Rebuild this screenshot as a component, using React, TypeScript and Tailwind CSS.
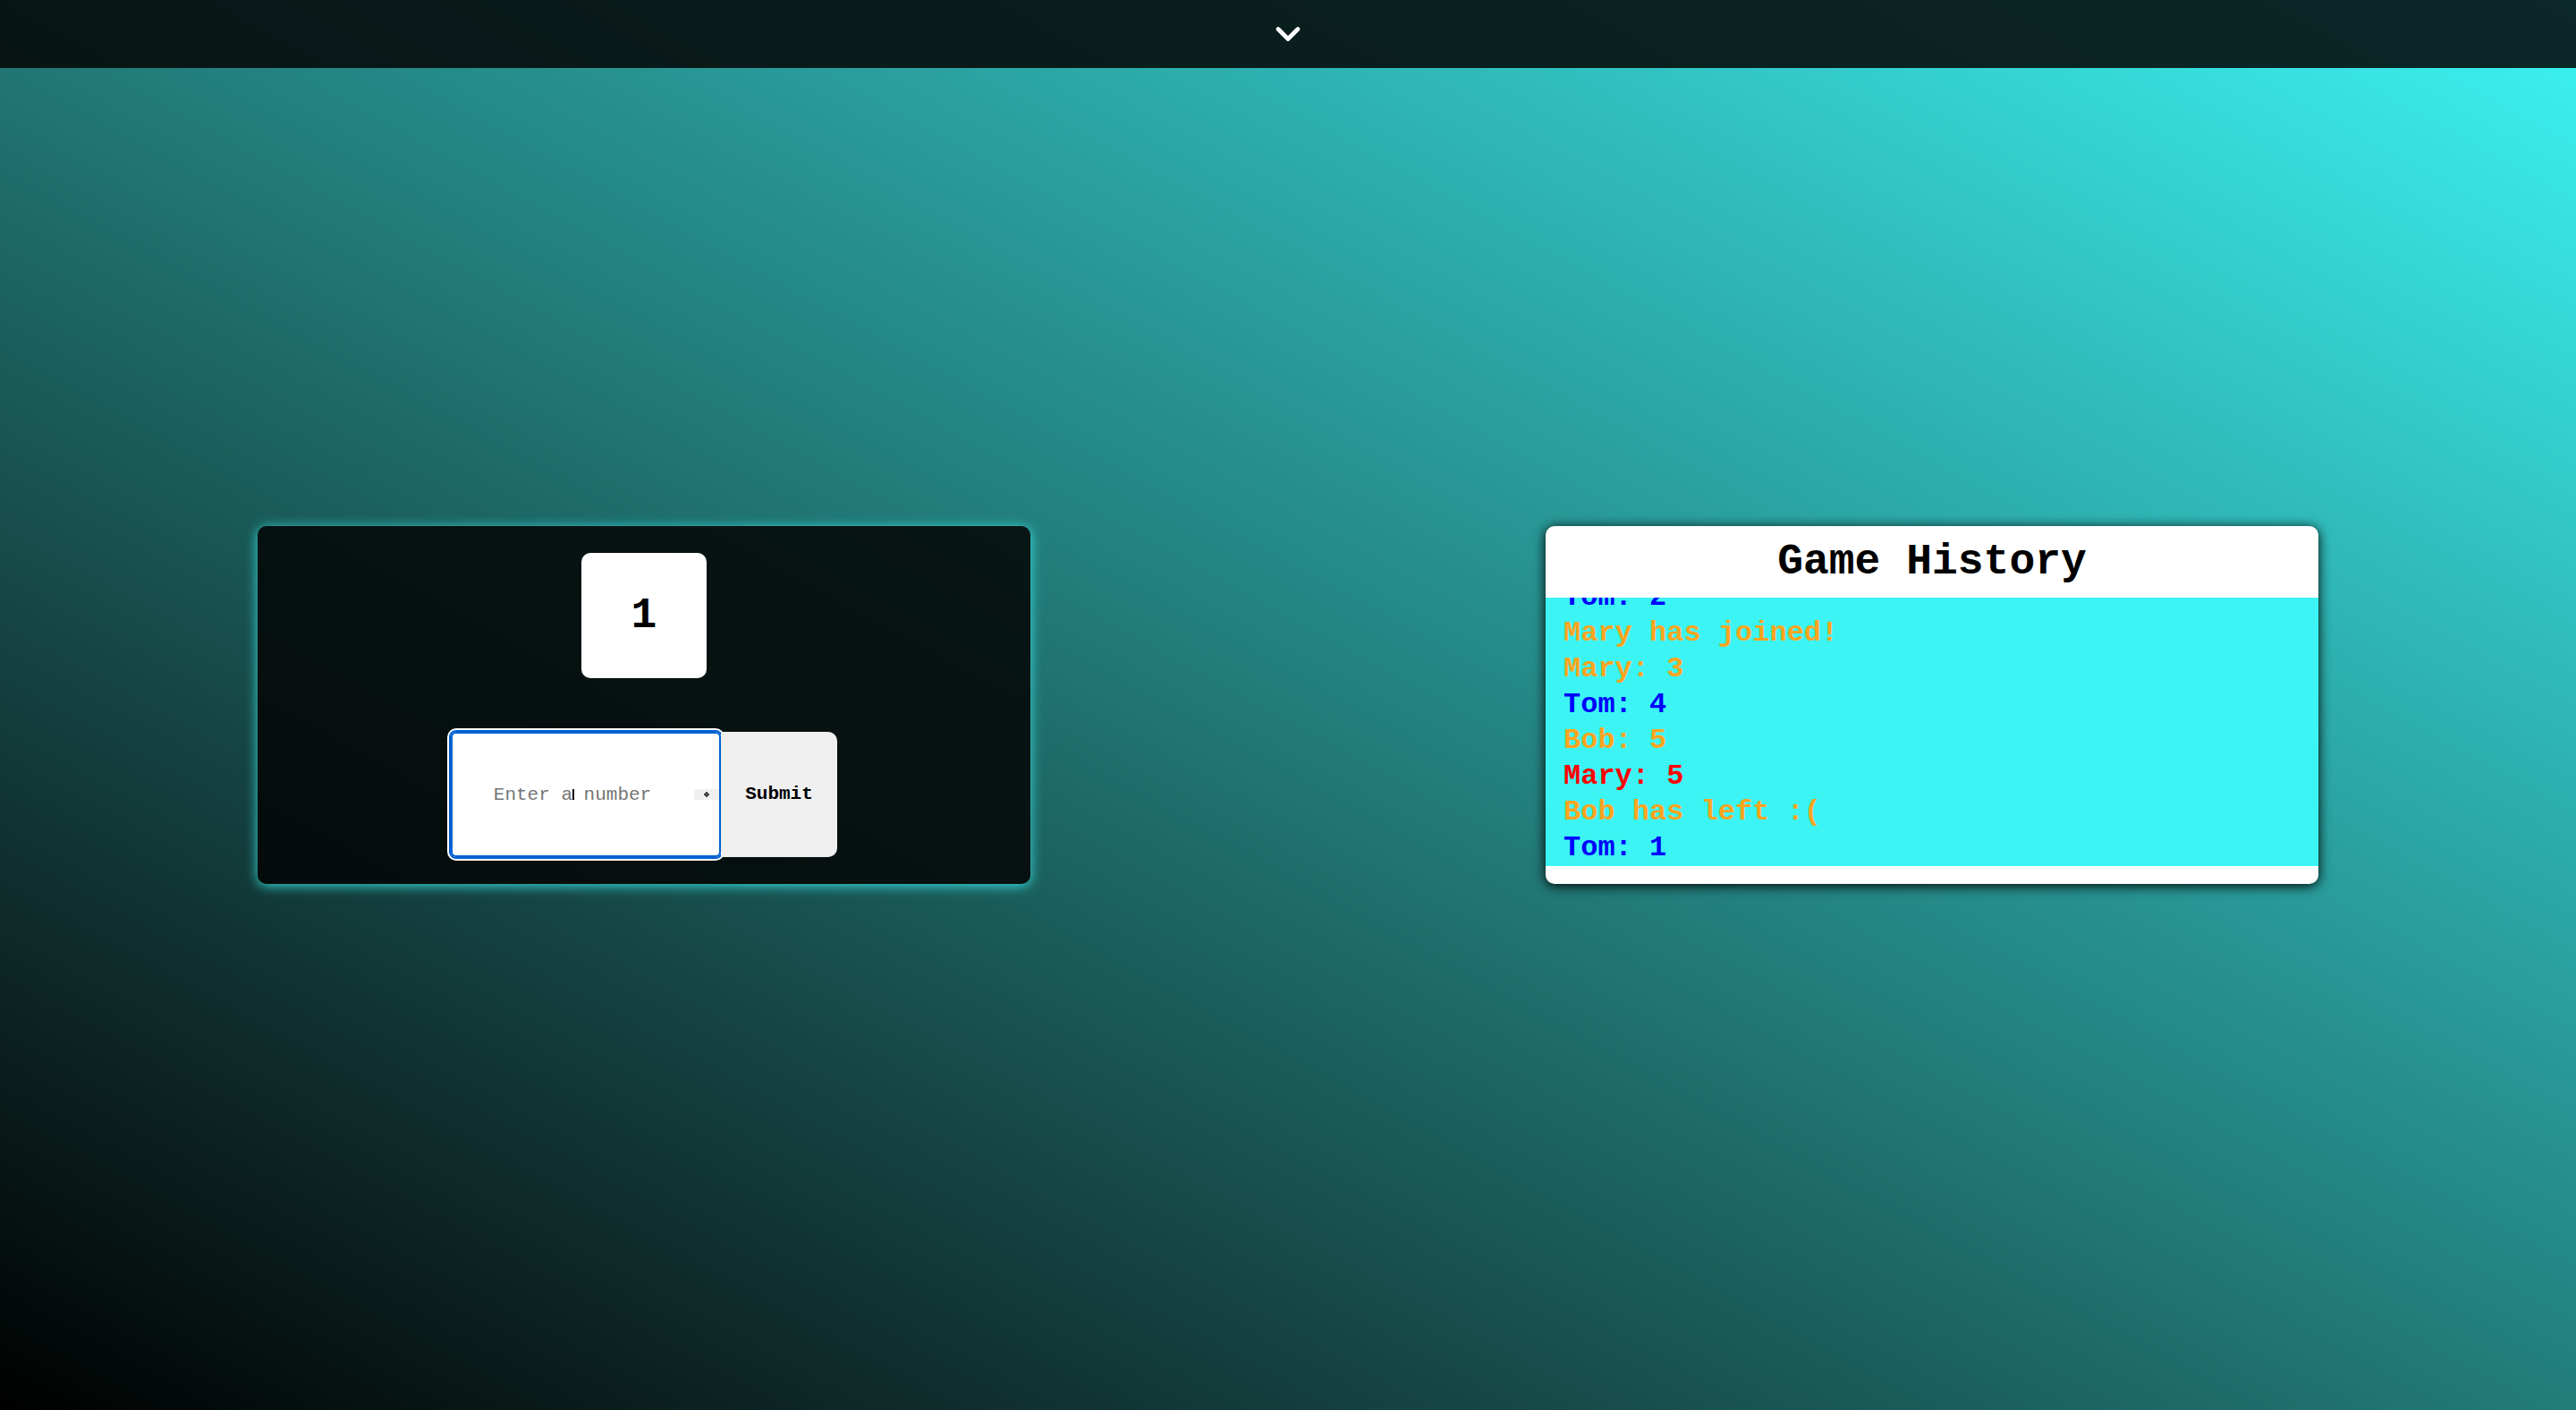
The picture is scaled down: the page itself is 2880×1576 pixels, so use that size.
type Entry = { text: string; color: string };

const history: Entry[] = [
  { text: "Tom: 2", color: "text-[#0000ff]" },
  { text: "Mary has joined!", color: "text-[#ffa51f]" },
  { text: "Mary: 3", color: "text-[#ffa51f]" },
  { text: "Tom: 4", color: "text-[#0000ff]" },
  { text: "Bob: 5", color: "text-[#ffa51f]" },
  { text: "Mary: 5", color: "text-[#ff0000]" },
  { text: "Bob has left :(", color: "text-[#ffa51f]" },
  { text: "Tom: 1", color: "text-[#0000ff]" },
];

function TopBar() {
  return (
    <header className="flex h-[76px] justify-center bg-[#030303]/85">
      <button type="button" aria-label="Open menu" className="flex items-center px-4 text-white">
        <svg viewBox="0 0 32 32" className="size-8" fill="none" stroke="currentColor" strokeWidth="4.8" strokeLinecap="round" strokeLinejoin="round">
          <path d="M5 10.5l11 11 11-11" />
        </svg>
      </button>
    </header>
  );
}

function NumberForm() {
  return (
    <form className="flex h-[140px] w-1/2" onSubmit={(e) => e.preventDefault()}>
      <label className="relative flex min-w-0 flex-1 items-center">
        <input
          type="text"
          inputMode="numeric"
          aria-label="Enter a number"
          placeholder="Enter a number"
          className="size-full rounded-md bg-white pr-[30px] text-center text-[21px] text-black shadow-[0_0_0_2px_#0060d1,0_0_0_4px_#ffffff,inset_0_0_0_2px_#0060d1] outline-none placeholder:text-[#757575]"
        />
        <span className="absolute left-[136px] h-3 w-[2px] bg-black" />
        <span className="absolute right-[2px] flex h-3 w-7 items-center justify-center bg-[#f0f0f0]">
          <svg viewBox="0 0 6 6" className="size-[6px] fill-[#4d4d4d]">
            <path d="M2 0h2v1h1v1h1v2h-1v1h-1v1h-2v-1h-1v-1h-1v-2h1v-1h1z" />
          </svg>
        </span>
      </label>
      <button type="submit" className="relative w-[130px] rounded-r-[10px] bg-[#efefef] text-[21px] font-bold text-black">
        Submit
      </button>
    </form>
  );
}

function GamePanel() {
  return (
    <section className="flex w-[30%] flex-col items-center justify-between rounded-[10px] bg-[#030303]/85 py-[30px] shadow-[0_2px_14px_#3cf4f4d9]">
      <output className="flex size-[140px] items-center justify-center rounded-[10px] bg-white text-5xl font-bold text-black">
        1
      </output>
      <NumberForm />
    </section>
  );
}

function HistoryPanel() {
  return (
    <section className="flex w-[30%] flex-col rounded-[10px] bg-white pb-5 shadow-[0_2px_14px_#000000]">
      <h2 className="flex h-20 items-center justify-center text-5xl font-bold text-black">Game History</h2>
      <ul className="flex flex-1 flex-col justify-end overflow-hidden bg-[#3cf4f4] pl-5 text-[32px]/10 font-bold">
        {history.map((entry, i) => (
          <li key={i} className={`shrink-0 ${entry.color}`}>
            {entry.text}
          </li>
        ))}
      </ul>
    </section>
  );
}

export default function App() {
  return (
    <div className="flex min-h-screen flex-col bg-[linear-gradient(to_top_right,#000000,#10302f_20%,#227c7a_50%,#3cf4f4)] font-['Liberation_Mono',monospace]">
      <TopBar />
      <main className="flex flex-1 items-center pb-[76px]">
        <div className="flex h-[400px] flex-1 justify-around">
          <GamePanel />
          <HistoryPanel />
        </div>
      </main>
    </div>
  );
}
